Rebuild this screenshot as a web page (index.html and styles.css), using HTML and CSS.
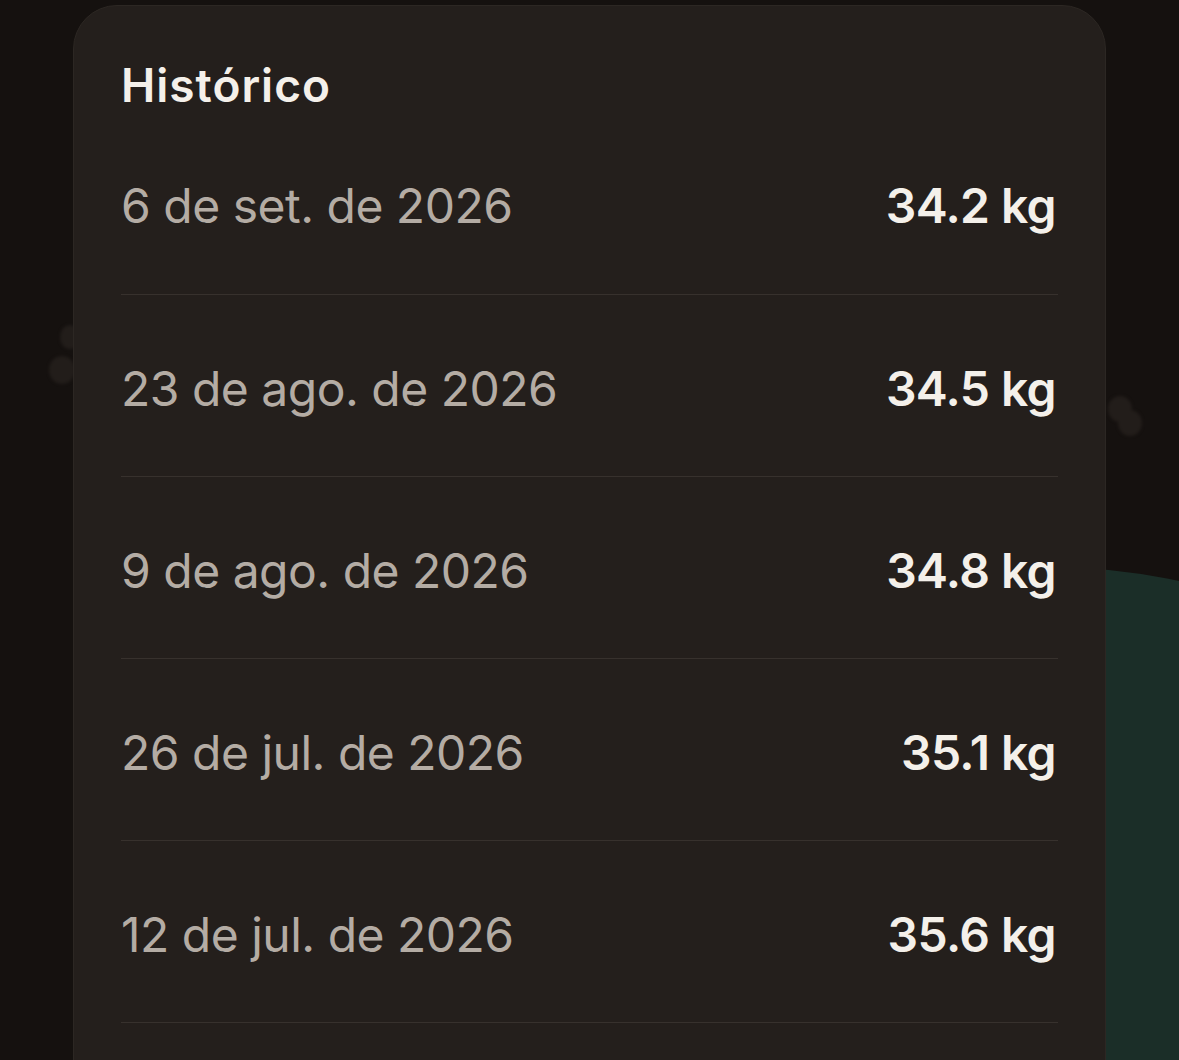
FILE: index.html
```html
<!DOCTYPE html>
<html lang="pt-BR">
<head>
<meta charset="utf-8">
<title>Histórico</title>
<link rel="stylesheet" href="styles.css">
</head>
<body>
<div class="scene">
  <div class="blob"></div>
  <svg class="paw paw-left" width="40" height="70" viewBox="0 0 40 70"><ellipse cx="22" cy="12" rx="10" ry="12" /><ellipse cx="14" cy="45" rx="13" ry="14" /></svg>
  <svg class="paw paw-right" width="40" height="50" viewBox="0 0 40 50"><ellipse cx="15" cy="14" rx="12" ry="13" /><ellipse cx="25" cy="28" rx="12" ry="13" /></svg>
  <section class="card">
    <h2 class="title">Histórico</h2>
    <ul class="list">
      <li class="row"><span class="date">6 de set. de 2026</span><span class="weight">34.2 kg</span></li>
      <li class="row"><span class="date">23 de ago. de 2026</span><span class="weight">34.5 kg</span></li>
      <li class="row"><span class="date">9 de ago. de 2026</span><span class="weight">34.8 kg</span></li>
      <li class="row"><span class="date">26 de jul. de 2026</span><span class="weight">35.1 kg</span></li>
      <li class="row"><span class="date">12 de jul. de 2026</span><span class="weight">35.6 kg</span></li>
    </ul>
  </section>
</div>
</body>
</html>
```
FILE: styles.css
```css
* { box-sizing: border-box; }
html, body {
  margin: 0;
  padding: 0;
  height: 100%;
  overflow: hidden;
  background: #15110f;
}
.scene {
  position: relative;
  width: 1179px;
  height: 1060px;
  overflow: hidden;
  padding: 5px 73px 0 73px;
  font-family: "Inter", "Lato", sans-serif;
}
.blob {
  position: absolute;
  left: 450px;
  top: 567px;
  width: 1200px;
  height: 1200px;
  border-radius: 50%;
  background: #1b2e28;
}
.paw {
  position: absolute;
  fill: #221d1a;
  filter: blur(1.5px);
}
.paw-left { left: 48px; top: 325px; }
.paw-right { left: 1105px; top: 395px; }
.card {
  position: relative;
  width: 1033px;
  height: 1200px;
  background: #241f1c;
  border: 1px solid #2c2723;
  border-radius: 44px;
  padding: 44px 47px 0 47px;
}
.title {
  margin: 0;
  font-size: 46px;
  line-height: 70px;
  font-weight: 600;
  color: #f4f0ea;
  letter-spacing: 1px;
}
.list {
  list-style: none;
  margin: 0;
  padding: 0;
}
.row {
  display: flex;
  justify-content: space-between;
  align-items: center;
  height: 182px;
  border-bottom: 1px solid #37312d;
  padding-right: 2px;
  padding-top: 6px;
}
.row:first-child {
  height: 175px;
  padding-top: 0;
  padding-bottom: 4px;
}
.date {
  font-size: 48px;
  font-weight: 400;
  color: #b4aca4;
  letter-spacing: -0.5px;
}
.weight {
  font-size: 48px;
  font-weight: 600;
  color: #f4f0ea;
  letter-spacing: -0.6px;
}
```
